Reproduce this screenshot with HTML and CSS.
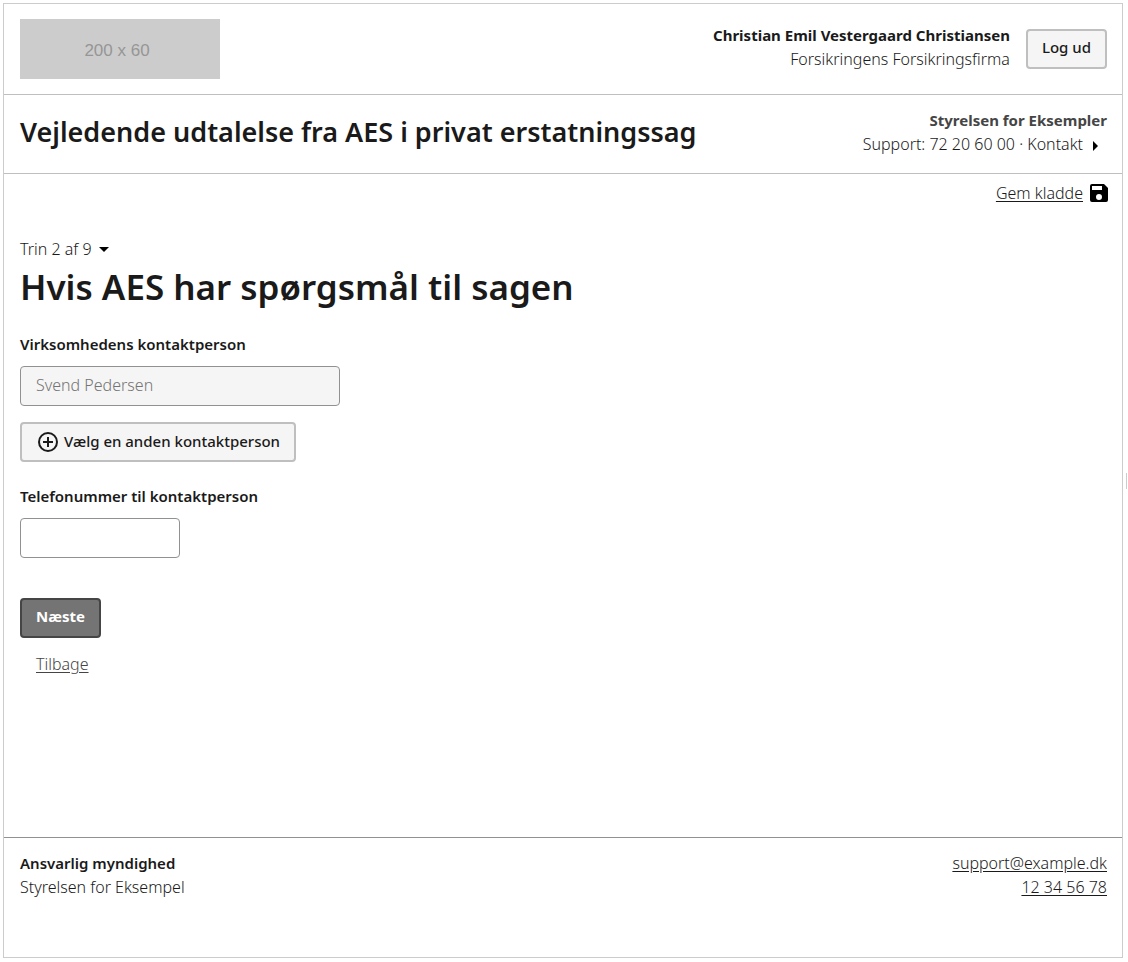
FILE: index.html
```html
<!DOCTYPE html>
<html lang="da">
<head>
<meta charset="utf-8">
<meta name="viewport" content="width=device-width, initial-scale=1">
<title>Vejledende udtalelse fra AES i privat erstatningssag</title>
<link rel="stylesheet" href="styles.css">
</head>
<body>
<div class="page">
  <header>
    <div class="bar portal-bar">
      <svg class="logo" viewBox="0 0 200 60" role="img" aria-label="200 x 60">
        <rect width="200" height="60" fill="#ccc"/>
        <text class="logo-text" x="97" y="37" text-anchor="middle">200 x 60</text>
      </svg>
      <div class="user">
        <div class="right">
          <p class="strong">Christian Emil Vestergaard Christiansen</p>
          <p>Forsikringens Forsikringsfirma</p>
        </div>
        <button class="btn" type="button">Log ud</button>
      </div>
    </div>
    <div class="bar solution-bar">
      <p class="solution-title">Vejledende udtalelse fra AES i privat erstatningssag</p>
      <div class="right">
        <p class="strong muted">Styrelsen for Eksempler</p>
        <p class="support">Support: 72 20 60 00 · <a class="plain" href="#kontakt">Kontakt<svg class="caret" viewBox="0 0 24 24" aria-hidden="true"><path d="M10 17l5-5-5-5z"/></svg></a></p>
      </div>
    </div>
  </header>
  <main class="main">
    <div class="actions">
      <a class="save" href="#gem">Gem kladde</a>
      <svg class="icon" viewBox="0 0 24 24" aria-hidden="true"><path d="M17 3H5a2 2 0 0 0-2 2v14a2 2 0 0 0 2 2h14a2 2 0 0 0 2-2V7l-4-4zm-5 16a3 3 0 1 1 0-6 3 3 0 0 1 0 6zm3-10H5V5h10v4z"/></svg>
    </div>
    <form class="form">
      <button class="step" type="button">Trin 2 af 9<svg class="caret" viewBox="0 0 24 24" aria-hidden="true"><path d="M7 10l5 5 5-5z"/></svg></button>
      <h1 class="title">Hvis AES har spørgsmål til sagen</h1>
      <div class="field">
        <label class="label" for="contact">Virksomhedens kontaktperson</label>
        <input class="input" id="contact" type="text" value="Svend Pedersen" disabled>
        <button class="btn btn-icon" type="button"><svg class="icon" viewBox="0 0 24 24" aria-hidden="true"><path d="M13 7h-2v4H7v2h4v4h2v-4h4v-2h-4V7zm-1-5a10 10 0 1 0 0 20 10 10 0 0 0 0-20zm0 18a8 8 0 1 1 0-16 8 8 0 0 1 0 16z"/></svg><span class="btn-text">Vælg en anden kontaktperson</span></button>
      </div>
      <div class="field">
        <label class="label" for="phone">Telefonummer til kontaktperson</label>
        <input class="input input-short" id="phone" type="tel">
      </div>
      <div class="nav">
        <button class="btn btn-primary" type="button">Næste</button>
        <a class="back" href="#tilbage">Tilbage</a>
      </div>
    </form>
  </main>
  <footer class="footer">
    <div>
      <p class="medium">Ansvarlig myndighed</p>
      <p>Styrelsen for Eksempel</p>
    </div>
    <div class="right">
      <p><a href="mailto:support@example.dk">support@example.dk</a></p>
      <p><a href="tel:12345678">12 34 56 78</a></p>
    </div>
  </footer>
</div>
</body>
</html>
```
FILE: styles.css
```css
* {
  box-sizing: border-box;
}

body {
  margin: 0;
  padding: 3px 5px 4px 3px;
  min-height: 100vh;
  display: flex;
  background: #fff;
  color: #1a1a1a;
  font-family: "Noto Sans", sans-serif;
  font-size: 16px;
  font-weight: 300;
  line-height: 24px;
}

p, h1 {
  margin: 0;
}

a {
  color: inherit;
  text-underline-offset: 2px;
}

button, input {
  font: inherit;
  color: inherit;
}

.page {
  flex: 1;
  display: flex;
  flex-direction: column;
  position: relative;
  border: 1px solid #ccc;
}

/* Resize handle outside the frame */
.page::after {
  content: "";
  position: absolute;
  top: 50%;
  right: -5px;
  width: 1px;
  height: 16px;
  margin-top: -8px;
  background: #ccc;
}

.bar {
  display: flex;
  justify-content: space-between;
  gap: 16px;
  padding: 15px;
  padding-left: 16px;
  border-bottom: 1px solid #bfbfbf;
}

.portal-bar {
  align-items: center;
}

.solution-bar {
  padding-top: 13px;
  padding-bottom: 17px;
}

.logo {
  width: 200px;
  height: 60px;
}

.logo-text {
  font-family: "Liberation Sans", Arial, sans-serif;
  font-size: 17px;
  font-weight: 400;
  fill: #969696;
}

.user {
  display: flex;
  align-items: center;
  gap: 16px;
}

.user .right {
  padding-bottom: 4px;
}

.right {
  text-align: right;
}

.strong {
  font-size: 15px;
  font-weight: 700;
}

.medium, .label {
  font-size: 15px;
  font-weight: 600;
}

.muted {
  color: #454545;
}

.solution-title {
  font-size: 27px;
  font-weight: 600;
  line-height: 48px;
}

.plain {
  text-decoration: none;
}

.caret {
  width: 24px;
  height: 24px;
  margin: -4px 0;
  vertical-align: middle;
}

.step .caret {
  margin: 0;
}

.btn {
  height: 40px;
  padding: 0 14px 4px;
  border: 2px solid #bfbfbf;
  border-radius: 4px;
  background: #f5f5f5;
  font-size: 15px;
  font-weight: 500;
}

.icon {
  width: 24px;
  height: 24px;
  flex: none;
  fill: #1a1a1a;
}

.actions .icon {
  fill: #000;
}

.main {
  flex: 1;
}

.actions {
  display: flex;
  justify-content: flex-end;
  gap: 4px;
  padding: 7px 11px 0;
}

.form {
  display: flex;
  flex-direction: column;
  align-items: flex-start;
  padding: 32px 16px;
}

.step {
  display: flex;
  padding: 0;
  border: 0;
  background: none;
}

.title {
  font-size: 35px;
  font-weight: 600;
  line-height: 52px;
  margin-bottom: 19px;
}

.field {
  display: flex;
  flex-direction: column;
  align-items: flex-start;
  margin-bottom: 22px;
}

.label {
  margin-bottom: 10px;
}

.input {
  width: 320px;
  max-width: 100%;
  height: 40px;
  padding: 0 15px 3px;
  border: 1px solid #919191;
  border-radius: 4px;
  background: #fff;
}

.input:disabled {
  background: #f5f5f5;
  color: #747474;
}

.input-short {
  width: 160px;
}

.btn-icon {
  display: flex;
  align-items: center;
  gap: 4px;
  margin-top: 16px;
  padding-top: 2px;
  padding-bottom: 2px;
}

.btn-text {
  padding-bottom: 3px;
}

.nav {
  display: flex;
  flex-direction: column;
  align-items: flex-start;
  gap: 14px;
  margin-top: 18px;
}

.btn-primary {
  border-color: #454545;
  background: #747474;
  color: #fff;
  font-weight: 700;
}

.back {
  padding-left: 16px;
  color: #454545;
}

.footer {
  display: flex;
  justify-content: space-between;
  gap: 16px;
  min-height: 120px;
  padding: 13px 15px 13px 16px;
  border-top: 1px solid #919191;
}
```
